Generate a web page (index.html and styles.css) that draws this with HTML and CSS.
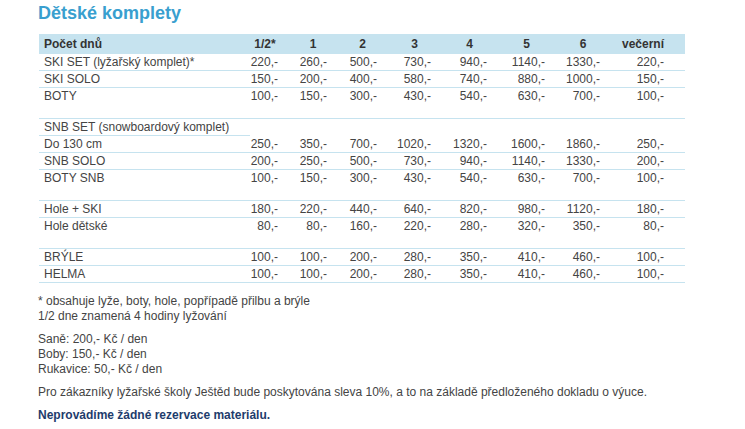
FILE: index.html
```html
<!DOCTYPE html>
<html lang="cs">
<head>
<meta charset="utf-8">
<title>Dětské komplety</title>
<link rel="stylesheet" href="styles.css">
</head>
<body>
<main class="page">
  <h1 class="title">Dětské komplety</h1>
  <table class="prices">
    <colgroup>
      <col class="col-name"><col class="col-half"><col class="col-d1"><col class="col-d2"><col class="col-d3"><col class="col-d4"><col class="col-d5"><col class="col-d6"><col class="col-eve">
    </colgroup>
    <thead>
      <tr>
        <th class="name">Počet dnů</th>
        <th class="half">1/2*</th>
        <th>1</th><th>2</th><th>3</th><th>4</th><th>5</th><th>6</th>
        <th class="eve">večerní</th>
      </tr>
    </thead>
    <tbody>
      <tr class="line"><td class="name">SKI SET (lyžařský komplet)*</td><td>220,-</td><td>260,-</td><td>500,-</td><td>730,-</td><td>940,-</td><td>1140,-</td><td>1330,-</td><td class="eve">220,-</td></tr>
      <tr class="line"><td class="name">SKI SOLO</td><td>150,-</td><td>200,-</td><td>400,-</td><td>580,-</td><td>740,-</td><td>880,-</td><td>1000,-</td><td class="eve">150,-</td></tr>
      <tr><td class="name">BOTY</td><td>100,-</td><td>150,-</td><td>300,-</td><td>430,-</td><td>540,-</td><td>630,-</td><td>700,-</td><td class="eve">100,-</td></tr>
      <tr class="spacer"><td colspan="9"></td></tr>
      <tr><td class="name group">SNB SET (snowboardový komplet)</td><td colspan="8"></td></tr>
      <tr class="line"><td class="name">Do 130 cm</td><td>250,-</td><td>350,-</td><td>700,-</td><td>1020,-</td><td>1320,-</td><td>1600,-</td><td>1860,-</td><td class="eve">250,-</td></tr>
      <tr class="line"><td class="name">SNB SOLO</td><td>200,-</td><td>250,-</td><td>500,-</td><td>730,-</td><td>940,-</td><td>1140,-</td><td>1330,-</td><td class="eve">200,-</td></tr>
      <tr><td class="name">BOTY SNB</td><td>100,-</td><td>150,-</td><td>300,-</td><td>430,-</td><td>540,-</td><td>630,-</td><td>700,-</td><td class="eve">100,-</td></tr>
      <tr class="spacer"><td colspan="9"></td></tr>
      <tr class="line"><td class="name">Hole + SKI</td><td>180,-</td><td>220,-</td><td>440,-</td><td>640,-</td><td>820,-</td><td>980,-</td><td>1120,-</td><td class="eve">180,-</td></tr>
      <tr><td class="name">Hole dětské</td><td>80,-</td><td>80,-</td><td>160,-</td><td>220,-</td><td>280,-</td><td>320,-</td><td>350,-</td><td class="eve">80,-</td></tr>
      <tr class="spacer"><td colspan="9"></td></tr>
      <tr class="line"><td class="name">BRÝLE</td><td>100,-</td><td>100,-</td><td>200,-</td><td>280,-</td><td>350,-</td><td>410,-</td><td>460,-</td><td class="eve">100,-</td></tr>
      <tr class="line"><td class="name">HELMA</td><td>100,-</td><td>100,-</td><td>200,-</td><td>280,-</td><td>350,-</td><td>410,-</td><td>460,-</td><td class="eve">100,-</td></tr>
    </tbody>
  </table>

  <p class="note">* obsahuje lyže, boty, hole, popřípadě přilbu a brýle<br>1/2 dne znamená 4 hodiny lyžování</p>
  <p class="note">Saně: 200,- Kč / den<br>Boby: 150,- Kč / den<br>Rukavice: 50,- Kč / den</p>
  <p class="note">Pro zákazníky lyžařské školy Ještěd bude poskytována sleva 10%, a to na základě předloženého dokladu o výuce.</p>
  <p class="note strong">Neprovádíme žádné rezervace materiálu.</p>
</main>
</body>
</html>
```

FILE: styles.css
```css
html, body {
  margin: 0;
  padding: 0;
  background: #ffffff;
}

body {
  font-family: "Liberation Sans", Arial, sans-serif;
  font-size: 12px;
  color: #444444;
}

.page {
  padding: 3px 0 0 38px;
  width: 647px;
}

.title {
  margin: 0 0 10px 0;
  font-size: 18px;
  line-height: 21px;
  font-weight: bold;
  color: #399fcf;
}

.prices {
  margin-left: 1px;
  width: 646px;
  table-layout: fixed;
  border-collapse: separate;
  border-spacing: 0;
}

.col-name { width: 211px; }
.col-half { width: 36px; }
.col-d1 { width: 49px; }
.col-d2 { width: 50px; }
.col-d3 { width: 54px; }
.col-d4 { width: 56px; }
.col-d5 { width: 58px; }
.col-d6 { width: 55px; }
.col-eve { width: 77px; }

.prices th {
  background: #c6e3ef;
  color: #333333;
  font-weight: bold;
  height: 20px;
  line-height: 20px;
  padding: 0 0 0 5px;
  text-align: center;
  white-space: nowrap;
}

.prices th.name {
  text-align: left;
  padding-left: 5px;
}

.prices th.half {
  padding: 0 6px 0 0;
}

.prices th.eve {
  padding: 0 7px 0 0;
}

.prices td {
  height: 16px;
  line-height: 16px;
  padding: 0 8px 0 0;
  text-align: right;
  white-space: nowrap;
  border-bottom: 1px solid transparent;
}

.prices td.name {
  text-align: left;
  padding: 0 0 0 5px;
}

.prices td.eve {
  padding-right: 21px;
}

.prices tr.line td {
  border-bottom-color: #c6e3ef;
}

.prices td.group {
  border-bottom-color: #c6e3ef;
}

.prices tr.spacer td {
  height: 13px;
  line-height: 13px;
  padding: 0;
  border-bottom-color: #c6e3ef;
}

.note {
  margin: 0 0 8px 0;
  line-height: 15px;
}

.prices + .note {
  margin-top: 11px;
}

.note.strong {
  font-weight: bold;
  color: #1e3c6c;
}
```
